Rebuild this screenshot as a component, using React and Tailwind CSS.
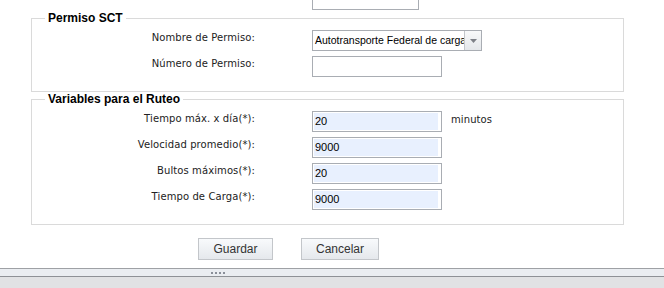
import React from 'react';

const labelFont = { fontFamily: '"DejaVu Sans", Verdana, sans-serif' };

function Label({ children }) {
    return (
        <div className="w-[223px] text-right text-[10px] leading-[12px] pt-[2px] tracking-[0.1px] text-[#222]" style={labelFont}>
            {children}
        </div>
    );
}

function TextBox({ value }) {
    return (
        <div className="w-[130px] h-[21px] border border-[#a9adb3] bg-white p-[1px] pr-[3px]">
            <div className="h-full bg-[#e8f0fe] pl-[1px] text-[11px] leading-[17px] text-black font-['Liberation_Sans',Arial,sans-serif]">
                {value}
            </div>
        </div>
    );
}

function Legend({ children }) {
    return (
        <legend className="ml-[13px] px-[3px] text-[12px] leading-[14px] font-bold text-black font-['Liberation_Sans',Arial,sans-serif]">
            {children}
        </legend>
    );
}

function Row({ label, children }) {
    return (
        <div className="flex items-start">
            <Label>{label}</Label>
            <div className="ml-[57px] flex items-start">{children}</div>
        </div>
    );
}

const routing = [
    { label: 'Tiempo máx. x día(*):', value: '20', unit: 'minutos' },
    { label: 'Velocidad promedio(*):', value: '9000' },
    { label: 'Bultos máximos(*):', value: '20' },
    { label: 'Tiempo de Carga(*):', value: '9000' },
];

export default function App() {
    return (
        <div className="w-[664px] h-[288px] bg-white overflow-hidden flex flex-col">
            <div className="ml-[312px] w-[107px] h-[10px] border-x border-b border-[#a9adb3] shrink-0" />

            <fieldset className="ml-[31px] w-[593px] mt-[1px] border border-[#dadada] pb-[14px] shrink-0">
                <Legend>Permiso SCT</Legend>
                <div className="flex flex-col gap-[5px] pt-[5px]">
                    <Row label="Nombre de Permiso:">
                        <div className="w-[170px] h-[21px] border border-[#a9adb3] bg-white flex">
                            <div className="flex-1 overflow-hidden whitespace-nowrap pl-[2px] text-[10.5px] leading-[19px] text-black font-['Liberation_Sans',Arial,sans-serif]">
                                Autotransporte Federal de carga (SCT)
                            </div>
                            <div className="w-[17px] border-l border-[#c3c6ca] bg-gradient-to-b from-[#f8f9fa] to-[#e4e7ea] flex items-center justify-center">
                                <svg width="7" height="4" viewBox="0 0 7 4">
                                    <path d="M0 0h7L3.5 4z" fill="#7d8087" />
                                </svg>
                            </div>
                        </div>
                    </Row>
                    <Row label="Número de Permiso:">
                        <div className="w-[130px] h-[21px] border border-[#a9adb3] bg-white" />
                    </Row>
                </div>
            </fieldset>

            <fieldset className="ml-[31px] w-[593px] border border-[#dadada] pb-[14px] shrink-0">
                <Legend>Variables para el Ruteo</Legend>
                <div className="flex flex-col gap-[5px] pt-[5px]">
                    {routing.map((r) => (
                        <Row key={r.label} label={r.label}>
                            <TextBox value={r.value} />
                            {r.unit && (
                                <span className="ml-[9px] pt-[3px] text-[10px] leading-[12px] tracking-[0.1px] text-[#222]" style={labelFont}>
                                    {r.unit}
                                </span>
                            )}
                        </Row>
                    ))}
                </div>
            </fieldset>

            <div className="flex ml-[198px] gap-[28px] mt-[13px] shrink-0">
                <button className="w-[75px] h-[22px] border border-[#c3c6ca] bg-gradient-to-b from-[#f8fafc] to-[#e5e8ec] text-[12px] text-[#333] font-['Liberation_Sans',Arial,sans-serif]">
                    Guardar
                </button>
                <button className="w-[78px] h-[22px] border border-[#c3c6ca] bg-gradient-to-b from-[#f8fafc] to-[#e5e8ec] text-[12px] text-[#333] font-['Liberation_Sans',Arial,sans-serif]">
                    Cancelar
                </button>
            </div>

            <div className="mt-[8px] flex-1 flex flex-col">
                <div className="h-[8px] border-t border-[#9ea1a5] bg-[#eaedf1] flex items-center pl-[211px] gap-[2px] shrink-0">
                    <span className="w-[2px] h-[2px] bg-[#8a8f99]" />
                    <span className="w-[2px] h-[2px] bg-[#8a8f99]" />
                    <span className="w-[2px] h-[2px] bg-[#8a8f99]" />
                    <span className="w-[2px] h-[2px] bg-[#8a8f99]" />
                </div>
                <div className="flex-1 border-t border-[#8e9196] bg-[#e1e2e4]" />
            </div>
        </div>
    );
}
